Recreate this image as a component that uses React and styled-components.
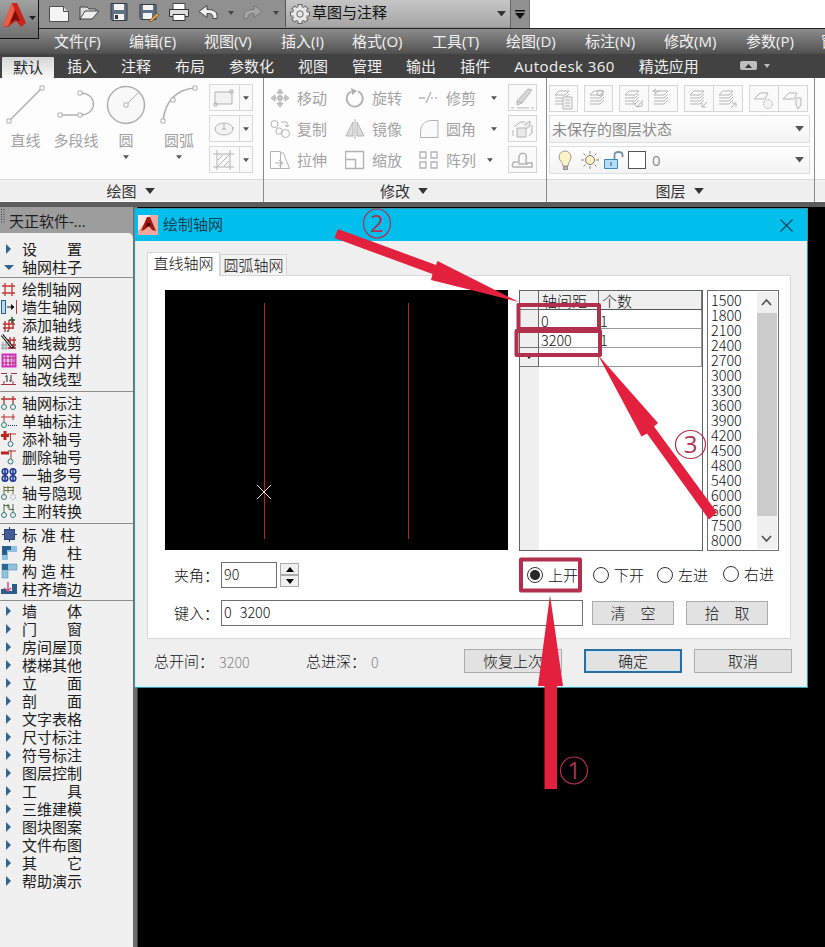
import React from "react";
import styled, { createGlobalStyle, css } from "styled-components";

const ui = `"Open Sans", "Noto Sans CJK SC", sans-serif`;
const song = `"Noto Sans CJK SC", sans-serif`;

const menus = [
  ["文件(F)", 75], ["编辑(E)", 75], ["视图(V)", 77], ["插入(I)", 71], ["格式(O)", 80], ["工具(T)", 74],
  ["绘图(D)", 79], ["标注(N)", 79], ["修改(M)", 82], ["参数(P)", 75], ["窗口(W)", 70],
];

const tabs = ["插入", "注释", "布局", "参数化", "视图", "管理", "输出", "插件", "Autodesk 360", "精选应用"];

const sections = [
  {
    items: [["right", "设置"], ["down", "轴网柱子"]],
    gap: 4,
    line: 1,
  },
  {
    items: [
      ["grid", "绘制轴网"], ["wall", "墙生轴网"], ["gridAdd", "添加轴线"],
      ["gridCut", "轴线裁剪"], ["gridMerge", "轴网合并"], ["gridType", "轴改线型"],
    ],
    gap: 6,
    line: 3,
  },
  {
    items: [
      ["dim2", "轴网标注"], ["dim1", "单轴标注"], ["numAdd", "添补轴号"], ["numDel", "删除轴号"],
      ["multi", "一轴多号"], ["hide", "轴号隐现"], ["swap", "主附转换"],
    ],
    gap: 6,
    line: 3,
  },
  {
    items: [["column", "标准柱"], ["corner", "角柱"], ["struct", "构造柱"], ["align", "柱齐墙边"]],
    gap: 4,
    line: 2,
  },
  {
    items: [
      "墙体", "门窗", "房间屋顶", "楼梯其他", "立面", "剖面", "文字表格", "尺寸标注", "符号标注",
      "图层控制", "工具", "三维建模", "图块图案", "文件布图", "其它", "帮助演示",
    ].map((t) => ["right", t]),
  },
];

const spacings = [
  1500, 1800, 2100, 2400, 2700, 3000, 3300, 3600, 3900, 4200, 4500, 4800, 5400, 6000, 6600, 7500, 8000,
];

const sideIcons = {
  right: <path d="M6 4l5 5-5 5z" fill="#2f6690" />,
  down: <path d="M4 7h10l-5 5z" fill="#2f6690" />,
  grid: <path d="M5 3v13M12 3v13M2 6h13M2 13h13" stroke="#c23a34" strokeWidth="1.3" />,
  wall: (
    <>
      <rect x="1.5" y="2.5" width="4" height="13" fill="#b5dcee" stroke="#2b6186" />
      <path d="M7 9h6M11 6.500l3 2.500-3 2.500" stroke="#111" fill="#111" />
      <path d="M16.500 2v14" stroke="#b83b3b" />
    </>
  ),
  gridAdd: (
    <>
      <path d="M5 5v11M9 4v10M13 3v10M3 8h12M3 12h11" stroke="#b62f2f" strokeWidth="1.3" />
      <path d="M12 1v6M9 4h6M7 15h2" stroke="#255b3a" strokeWidth="1.6" />
    </>
  ),
  gridCut: (
    <>
      <path d="M3 8v8M6 8v8M1 11h7M1 14h7" stroke="#8e979a" />
      <path d="M10 3v12M14 3v12M8 6h8M8 11h8M8 14h8" stroke="#b62f2f" strokeWidth="1.3" />
      <path d="M2 1l11 13" stroke="#222" strokeWidth="3" />
      <path d="M2 1l10 12" stroke="#fff" />
    </>
  ),
  gridMerge: (
    <>
      <rect x="2.500" y="2.500" width="13" height="12" fill="#f6c8ed" stroke="#d02ec3" strokeWidth="2" />
      <path d="M6 3v11M10 3v11M13 3v11M3 6h12M3 11h12" stroke="#b01a76" />
    </>
  ),
  gridType: (
    <>
      <path d="M1 3.500h6M11 3.500h6M1 14.500h15M4 11v3M13 11v3" stroke="#a5333a" />
      <path d="M7 6v6M11 5v6M5.500 7L7 5M9.500 10l1.500 2" stroke="#222" />
    </>
  ),
  dim2: (
    <>
      <path d="M1 5h15M4 2v8M13 2v8" stroke="#b93131" strokeWidth="1.3" />
      <circle cx="4" cy="13" r="2.500" stroke="#2f7b79" fill="none" />
      <circle cx="13" cy="13" r="2.500" stroke="#2f7b79" fill="none" />
    </>
  ),
  dim1: (
    <>
      <path d="M1 5h14M4 2v8M13 2v6" stroke="#b93131" />
      <circle cx="4" cy="13" r="2.500" stroke="#2f7b79" fill="none" />
      <path d="M8 13.500h9" stroke="#2d344d" strokeDasharray="1 1" />
    </>
  ),
  numAdd: (
    <>
      <path d="M5 1v9M1 5.500h8" stroke="#c02222" strokeWidth="3" />
      <path d="M7 4h9M10.500 3v8" stroke="#b93131" />
      <circle cx="10.500" cy="14" r="2.500" stroke="#2f7b79" fill="none" />
    </>
  ),
  numDel: (
    <>
      <path d="M1 5h8" stroke="#c02222" strokeWidth="3" />
      <path d="M8 3h8M11 2v9" stroke="#b93131" />
      <circle cx="10.500" cy="13.500" r="2.500" stroke="#2f7b79" fill="none" />
    </>
  ),
  multi: (
    <g stroke="#213a91" strokeWidth="1.500" fill="#c4d1f1">
      <circle cx="5" cy="5.500" r="2.800" />
      <circle cx="13" cy="5.500" r="2.800" />
      <circle cx="5" cy="12.500" r="2.800" />
      <circle cx="13" cy="12.500" r="2.800" />
      <path d="M5 3v12M13 3v12" />
    </g>
  ),
  hide: (
    <>
      <path d="M4 2v9M13 2v8M4 3.500h10M4 6.500h10M8 2v7" stroke="#6b743f" fill="none" />
      <circle cx="4" cy="13" r="2.500" stroke="#2f7b79" fill="none" />
      <circle cx="13" cy="13" r="2.500" stroke="#a3a0bb" strokeDasharray="2 1" fill="none" />
    </>
  ),
  swap: (
    <>
      <path d="M4 2v9M13 2v8M4 3.500h5v4h5M8 2v4" stroke="#4b6944" fill="none" />
      <circle cx="4" cy="13" r="2.500" stroke="#2f7b79" fill="none" />
      <circle cx="13" cy="13" r="2.500" stroke="#2f7b79" fill="none" />
    </>
  ),
  column: (
    <>
      <path d="M9.500 1v15M2 8.500h15" stroke="#1f2d59" />
      <rect x="4.500" y="3.500" width="10" height="10" fill="#3f5d94" stroke="#2e4476" />
    </>
  ),
  corner: (
    <>
      <path d="M2 2h15v6H8v8H2z" fill="#8fc2df" />
      <path d="M2 2h9v4H7v5H2z" fill="#275e8c" />
    </>
  ),
  struct: (
    <>
      <path d="M2 2h15v6H8v8H2z" fill="#8fc2df" stroke="#4c84aa" strokeWidth=".5" />
      <path d="M2 2h6v6H2z" fill="#2c6797" />
    </>
  ),
  align: (
    <>
      <path d="M1 9h6v5H1zM7 11h10v3H7zM12 4h5v8h-5z" fill="#2a5c8c" />
      <path d="M8 2v10M4 8l4 3 3-3" stroke="#d0507e" strokeWidth="1.500" fill="none" />
    </>
  ),
};

const modifyIcons = {
  move: (
    <path
      d="M10 1l3 4H7zM10 19l3-4H7zM1 10l4-3v6zM19 10l-4-3v6zM8 8h4v4H8zM10 4v4M10 12v4M4 10h4M12 10h4"
      fill="#c9c9c9"
    />
  ),
  rotate: (
    <>
      <path d="M6 3.500a8 8 0 1 0 7-.2" strokeWidth="1.800" />
      <path d="M6 0l6 3-5 4z" fill="#b0b0b0" stroke="none" />
    </>
  ),
  trim: <path d="M0 10h6M12 10h2M16 10h2M7 15l5-11" strokeWidth="1.300" />,
  copy: (
    <>
      <circle cx="4.500" cy="5" r="3.500" />
      <circle cx="9" cy="12" r="3.200" />
      <circle cx="15.500" cy="14.500" r="4" />
      <path d="M11 3h6v4M15 6l2 2 2-2" />
    </>
  ),
  mirror: <path d="M8 3v14H1zM12 3v14h7zM10 0v20" fill="#dedede" />,
  fillet: <path d="M1.500 18.500V12C2 5 7 1.500 13 1.500h6v17z" fill="#fafafa" />,
  stretch: <path d="M.5 1.500h10v17H.5zM10.500 3h3l6 15.500h-9M5 13h7M9 10l4 3-4 3" fill="none" />,
  scale: <path d="M.5 1.500h18v17H.5zM.5 9.500h10v9" strokeWidth="1.400" />,
  array: <path d="M1 2h6v6H1zM12 2h6v6h-6zM1 12h6v6H1zM12 12h6v6h-6z" strokeWidth="1.300" />,
};

const modifyRows = [
  [["move", "移动"], ["rotate", "旋转"], ["trim", "修剪"]],
  [["copy", "复制"], ["mirror", "镜像"], ["fillet", "圆角"]],
  [["stretch", "拉伸"], ["scale", "缩放"], ["array", "阵列"]],
];

const sheets = "M8 4h10l-4 4H4zM4 11h10l4-4M4 14h10l4-4M4 17h10l4-4";

const layerTools = [
  [<path d="M13 11h9v12h-9zM15 14h5M15 17h5M15 20h5" fill="#f4f4f4" />],
  [<circle cx="15" cy="7" r="3" />],
  [<path d="M13 16l4 5 6-7M17 21l5-1v-4" />, <path d="M4 5h7M4 5l3-2M4 5l3 2" />],
  [<path d="M22 16l-5 5M17 17v4h4" />, <path d="M17 22l5-5M18 17h4v4" />],
  [
    <circle cx="18" cy="18" r="4.500" fill="#f2f2f2" strokeDasharray="2 1" />,
    <path d="M17 12h5v7l-3 4-2-4z" fill="#f4f4f4" />,
  ],
];

function Arrow({ w = 8, color = "#555" }) {
  return (
    <svg width={w} height={w / 2 + 1} viewBox="0 0 8 5">
      <path d="M0 0h8L4 5z" fill={color} />
    </svg>
  );
}

function SideItem({ icon, text }) {
  return (
    <SideRow>
      <svg width="18" height="18" viewBox="0 0 18 18">
        {sideIcons[icon]}
      </svg>
      <SideText $narrow={text.length === 3}>
        {text.length < 4 ? [...text].map((c) => <span key={c}>{c}</span>) : text}
      </SideText>
    </SideRow>
  );
}

function QuickAccess() {
  return (
    <Quick>
      <svg width="246" height="28" viewBox="38 0 246 28" fill="none">
        <path d="M49.500 6.500h14l5 5v10h-19z" fill="#f4f4f4" stroke="#4d4d4d" />
        <path d="M63.500 6.500v5h5" fill="#ddd" stroke="#4d4d4d" />
        <path d="M80 7h7l2 2h7v4H85l-5 7z" fill="#ddd" stroke="#444" />
        <path d="M80 19l5-8h14l-7 8z" fill="#eee" stroke="#444" />
        <path d="M111 3.500h16v17h-15l-1-1z" fill="#5f7183" stroke="#343c44" />
        <path d="M114 4h10v6h-10zM114 14h10v6h-10z" fill="#f2f2f2" />
        <path d="M115 15h3v4h-3z" fill="#333" />
        <path d="M140 4.500h16v15h-15l-1-1z" fill="#5f7183" stroke="#343c44" />
        <path d="M143 5h10v5h-10zM143 13h9v6h-9z" fill="#f2f2f2" />
        <path d="M149 21l8-8 2 2-8 7z" fill="#e5a44f" stroke="#694a28" strokeWidth=".7" />
        <path d="M173 3.500h12v6h-12z" fill="#fff" stroke="#444" />
        <path d="M169.500 9.500h19v7h-19z" fill="#ddd" stroke="#333" />
        <path d="M173 14.500h12v6h-12z" fill="#fff" stroke="#333" />
        <path d="M199 11.500l8-6v4c7 0 11 2 10 9h-4c0-4-1-5-6-5v4z" fill="#eee" stroke="#444" />
        <path d="M228 11h6l-3 4zM273 11h6l-3 4z" fill="#444" />
        <path d="M262 11.500l-8-6v4c-7 0-11 2-10 9h4c0-4 1-5 6-5v4z" fill="#a5a5a5" stroke="#777" />
      </svg>
      <Workspace>
        <svg width="24" height="24" viewBox="-12 -12 24 24" fill="#e9e9e9" stroke="#666">
          {[0, 45, 90, 135].map((a) => (
            <rect key={a} x="-2" y="-9.500" width="4" height="19" transform={`rotate(${a})`} />
          ))}
          <circle r="7" stroke="none" />
          <circle r="3.200" />
        </svg>
        <span>草图与注释</span>
        <Arrow w={9} color="#333" />
      </Workspace>
      <QuickMore>
        <svg width="10" height="9" viewBox="0 0 10 9">
          <path d="M0 0h10v1.500H0zM0 3h10L5 9z" fill="#111" />
        </svg>
      </QuickMore>
    </Quick>
  );
}

function DrawPanel() {
  return (
    <Panel $w={264}>
      <PanelBody>
        <Tool $w={51}>
          <svg width="40" height="42" viewBox="0 0 40 42">
            <path d="M3 38L36 5" strokeWidth="1.500" />
            <path d="M1 36h4v4H1zM34 3h4v4h-4z" fill="#fff" />
          </svg>
          直线
        </Tool>
        <Tool $w={50}>
          <svg width="40" height="42" viewBox="0 0 40 42">
            <path d="M4 32h20M24 10c18 0 18 22 0 22" strokeWidth="1.500" />
            <path d="M2 30h4v4H2zM22 30h4v4h-4zM22 8h4v4h-4z" fill="#fff" />
          </svg>
          多段线
        </Tool>
        <Tool $w={50}>
          <svg width="40" height="42" viewBox="0 0 40 42">
            <circle cx="20" cy="22" r="18.500" fill="#f8f8f8" strokeWidth="1.500" />
            <path d="M20 22L33 9" />
            <path d="M18 20h4v4h-4z" fill="#fff" />
          </svg>
          圆
          <Arrow w={6} />
        </Tool>
        <Tool $w={56}>
          <svg width="40" height="42" viewBox="0 0 40 42">
            <path d="M4 38C6 18 18 6 36 5" strokeWidth="1.500" />
            <path d="M2 36h4v4H2zM12 15h4v4h-4zM34 3h4v4h-4z" fill="#fff" />
          </svg>
          圆弧
          <Arrow w={6} />
        </Tool>
        <SplitColumn>
          {[
            <path key="r" d="M5 7h17v12H5zM20 5h3v3h-3zM4 18h3v3H4z" fill="#f2f2f2" />,
            <g key="e">
              <ellipse cx="14" cy="13" rx="9" ry="6" fill="#f2f2f2" />
              <path d="M14 8v6M12 13h4M22 12h2" />
            </g>,
            <path key="h" d="M3 7h21M3 20h21M7 3v20M20 3v20M8 13l5-5M8 19L19 8M14 19l5-5" />,
          ].map((icon, i) => (
            <Split key={i}>
              <svg width="29" height="26" viewBox="0 0 29 26">{icon}</svg>
              <SplitDrop><Arrow w={6} /></SplitDrop>
            </Split>
          ))}
        </SplitColumn>
      </PanelBody>
      <PanelTitle>绘图 <Arrow w={10} color="#333" /></PanelTitle>
    </Panel>
  );
}

function ModifyPanel() {
  return (
    <Panel $w={283}>
      <ModifyGrid>
        {modifyRows.map((row, r) => (
          <React.Fragment key={r}>
            {row.map(([icon, text]) => (
              <ModifyItem key={text}>
                <svg width="20" height="20" viewBox="0 0 20 20" fill="none" stroke="#b3b3b3">
                  {modifyIcons[icon]}
                </svg>
                {text}
              </ModifyItem>
            ))}
            <ModifyDrop $shift={r === 2}><Arrow w={6} /></ModifyDrop>
            <ToolButton $w={29}>
              <svg width="27" height="26" viewBox="0 0 27 26">
                {r === 0 && <path d="M8 16L19 4l4 1-10 13-5 2zM8 16l5 2M2 23h3M8 23h12M22 23h3" fill="#d6d6d6" />}
                {r === 1 && <path d="M8 12h9v9H8zM4 14v6M5 11l6-5h5M15 9l6-4v5l-4 3M23 9v8l-3 3" fill="#e9e9e9" />}
                {r === 2 && <path d="M4 20h19v-4h-6v-3c3-9-9-9-7 0v2H5c-2 1-2 4-1 5zM9 17h10" fill="none" strokeWidth="1.500" />}
              </svg>
            </ToolButton>
          </React.Fragment>
        ))}
      </ModifyGrid>
      <PanelTitle>修改 <Arrow w={10} color="#333" /></PanelTitle>
    </Panel>
  );
}

function LayerPanel() {
  return (
    <Panel $w={268}>
      <LayerBody>
        <LayerTools>
          {layerTools.map((group, i) => (
            <ToolGroup key={i}>
              {group.map((icon, j) => (
                <ToolButton key={j} $w={group.length > 1 ? 29.5 : 29} $join={j > 0}>
                  <svg width="27" height="26" viewBox="0 0 27 26">
                    {i < 4 ? (
                      <path d={sheets} transform="translate(1 1)" fill="none" />
                    ) : (
                      <path d="M10 7h8l-3 6H4z" fill="none" />
                    )}
                    {icon}
                  </svg>
                </ToolButton>
              ))}
            </ToolGroup>
          ))}
        </LayerTools>
        <Combo>
          <span>未保存的图层状态</span>
          <Arrow w={9} />
        </Combo>
        <Combo>
          <svg width="98" height="26" viewBox="0 0 98 26" fill="none">
            <path d="M11 19c0-4-4-5-4-9a6 6 0 0 1 12 0c0 4-3 5-3 9z" fill="#fdf3c4" stroke="#999" />
            <path d="M11.500 19.500h4v3h-4z" fill="#bbb" stroke="#888" />
            <circle cx="38" cy="13" r="4.500" fill="#fdf2bd" stroke="#777" />
            <path d="M38 4v3M38 19v3M29 13h3M44 13h3M31.500 6.500l2 2M42.500 17.500l2 2M31.500 19.500l2-2M42.500 8.500l2-2" stroke="#8c866c" />
            <path d="M52.500 12.500h13v9h-13z" fill="#b5dcf5" stroke="#3b8abc" />
            <path d="M62.500 12V8c0-4 8-4 8 0v2M59 15v4" stroke="#7295a8" strokeWidth="1.800" />
            <rect x="76.500" y="4.500" width="17" height="17" fill="#fff" stroke="#555" />
          </svg>
          <LayerName>0</LayerName>
          <Arrow w={9} />
        </Combo>
      </LayerBody>
      <PanelTitle>图层 <Arrow w={10} color="#333" /></PanelTitle>
    </Panel>
  );
}

function AxisDialog() {
  return (
    <Dialog>
      <TitleBar>
        <svg width="20" height="20" viewBox="0 0 20 20">
          <rect width="20" height="20" fill="#f0a79c" />
          <path d="M0 0h13L0 16z" fill="#fbe5e0" />
          <path d="M3 16L9 2h3l6 14-4-1-3-4-5 4z" fill="#a3170f" />
          <path d="M9 8h3l1 3-5 1z" fill="#4b0704" />
        </svg>
        <span>绘制轴网</span>
        <svg width="13" height="13" viewBox="0 0 13 13">
          <path d="M.5.5l12 12M12.500.5l-12 12" stroke="#14465c" strokeWidth="1.200" />
        </svg>
      </TitleBar>
      <TabRow>
        <DialogTab $active>直线轴网</DialogTab>
        <DialogTab>圆弧轴网</DialogTab>
      </TabRow>
      <TabPage>
        <TopRow>
          <Preview>
            <svg width="343" height="260" viewBox="0 0 343 260" fill="none">
              <path d="M99.500 13v236M243.500 13v236" stroke="#b3241c" />
              <path d="M92 195l14 14M106 195l-14 14" stroke="#e8e8e8" />
            </svg>
          </Preview>
          <Sheet>
            <SheetGutter>
              <GutterCell />
              <GutterCell />
              <GutterCell />
              <GutterCell><Arrow w={6} color="#111" /></GutterCell>
            </SheetGutter>
            <SheetTable>
              <HeadCell>轴间距</HeadCell>
              <HeadCell>个数</HeadCell>
              <Cell>0</Cell>
              <Cell>1</Cell>
              <Cell>3200</Cell>
              <Cell>1</Cell>
              <Cell />
              <Cell />
            </SheetTable>
          </Sheet>
          <ListBox>
            <ListItems>
              {spacings.map((n) => (
                <div key={n}>{n}</div>
              ))}
            </ListItems>
            <ScrollBar>
              <svg width="19" height="21" viewBox="0 0 19 21" fill="none">
                <path d="M5 13l4.500-5 4.500 5" stroke="#555" strokeWidth="1.800" />
              </svg>
              <Thumb />
              <svg width="19" height="33" viewBox="0 0 19 33" fill="none">
                <path d="M5 20l4.500 5 4.500-5" stroke="#555" strokeWidth="1.800" />
              </svg>
            </ScrollBar>
          </ListBox>
        </TopRow>
        <FieldRow $top={11}>
          <Label $w={47}>夹角：</Label>
          <Field $w={56}>90</Field>
          <Spinner>
            <SpinButton><svg width="8" height="5"><path d="M0 5h8L4 0z" /></svg></SpinButton>
            <SpinButton><svg width="8" height="5"><path d="M0 0h8L4 5z" /></svg></SpinButton>
          </Spinner>
          <Radios>
            <Radio $w={66}><Dot $on />上开</Radio>
            <Radio $w={64}><Dot />下开</Radio>
            <Radio $w={66}><Dot />左进</Radio>
            <Radio $w={46} $raised><Dot />右进</Radio>
          </Radios>
        </FieldRow>
        <FieldRow $top={12}>
          <Label $w={47}>键入：</Label>
          <Field $w={362}>0 3200</Field>
          <Button $w={82} $left={9}>清　空</Button>
          <Button $w={82} $left={12}>拾　取</Button>
        </FieldRow>
      </TabPage>
      <Footer>
        <Label $w={65}>总开间：</Label>
        <Total $w={87}>3200</Total>
        <Label $w={65}>总进深：</Label>
        <Total $w={93}>0</Total>
        <Button $w={98}>恢复上次</Button>
        <Button $w={98} $left={22} $primary>确定</Button>
        <Button $w={98} $left={12}>取消</Button>
      </Footer>
    </Dialog>
  );
}

// Red callouts drawn over the window
function Callouts() {
  return (
    <Overlay width="825" height="947" viewBox="0 0 825 947">
      <g fill="none" stroke="#b2304d" strokeWidth="4" strokeLinejoin="round">
        <rect x="518.500" y="305" width="80.500" height="24" />
        <rect x="516.500" y="331" width="83.500" height="24" />
        <rect x="521" y="559.500" width="59" height="31" />
      </g>
      <g fill="#e3203d">
        <path d="M338 229l98 36 1.500-4L519 302l-88-22 1.500-6L334.500 238z" />
        <path d="M598 355l60 68-4 3.500 63 86-8 7-62-86-5.500 3z" />
        <path d="M550 595l13 91h-6v103h-12.500V686H538z" />
      </g>
      <g fill="none" stroke="#b2304d" strokeWidth="1.200">
        <circle cx="574" cy="770.500" r="13.500" />
        <ellipse cx="377" cy="223.500" rx="13.500" ry="14.500" />
        <ellipse cx="690.500" cy="444.500" rx="15" ry="14" />
      </g>
      <CalloutText x="574" y="779">1</CalloutText>
      <CalloutText x="377" y="232">2</CalloutText>
      <CalloutText x="690.500" y="453">3</CalloutText>
    </Overlay>
  );
}

export default function App() {
  return (
    <Screen>
      <Global />
      <QuickAccess />
      <MenuBar>
        {menus.map(([t, w]) => (
          <MenuItem key={t} $w={w}>{t}</MenuItem>
        ))}
      </MenuBar>
      <RibbonTabs>
        <RibbonTab $active>默认</RibbonTab>
        {tabs.map((t) => (
          <RibbonTab key={t} $latin={t.startsWith("A")}>{t}</RibbonTab>
        ))}
        <RibbonToggle width="32" height="12" viewBox="0 0 32 12">
          <rect x="0" y="1" width="17" height="9" rx="2" fill="#bdbdbd" />
          <path d="M5 8h7L8.500 4z" fill="#333" />
          <path d="M24 4h6l-3 4z" fill="#bbb" />
        </RibbonToggle>
      </RibbonTabs>
      <Ribbon>
        <DrawPanel />
        <ModifyPanel />
        <LayerPanel />
        <Panel $w={30}>
          <PanelBody />
          <PanelTitle />
        </Panel>
      </Ribbon>
      <Strip />
      <Main>
        <Sidebar>
          <SideTitle>
            <svg width="5" height="14" viewBox="0 0 5 14">
              <path d="M1.500 0v14M4 0v14" stroke="#444" strokeDasharray="1 1.500" />
            </svg>
            天正软件-...
          </SideTitle>
          <SideTree>
            {sections.map((s, i) => (
              <React.Fragment key={i}>
                {s.items.map(([icon, text]) => (
                  <SideItem key={text} icon={icon} text={text} />
                ))}
                {s.gap && <SideLine $gap={s.gap} $line={s.line} />}
              </React.Fragment>
            ))}
          </SideTree>
        </Sidebar>
        <Splitter />
      </Main>
      <AppButton>
        <svg width="38" height="38" viewBox="0 0 38 38">
          <path d="M3 26L12 3h5l9 20-5 4-5-6-8 6z" fill="#c9251a" />
          <path d="M12 3l3 8-7 15-5 0z" fill="#ea5f48" />
          <path d="M15 10l5 11-5-1-5 3z" fill="#7f0d08" />
          <path d="M29 16h7l-3.500 4z" fill="#222" />
        </svg>
      </AppButton>
      <AxisDialog />
      <Callouts />
    </Screen>
  );
}

const Global = createGlobalStyle`
  body {
    margin: 0;
    background: #000;
  }
  * {
    box-sizing: border-box;
  }
  svg {
    display: block;
    flex: none;
  }
`;

const Screen = styled.div`
  position: relative;
  display: flex;
  flex-direction: column;
  width: 825px;
  height: 947px;
  overflow: hidden;
  background: #000;
  font-family: ${ui};
  font-size: 15px;
  white-space: nowrap;
`;

const Quick = styled.div`
  display: flex;
  flex: none;
  height: 28px;
  padding-left: 38px;
  background: linear-gradient(to right, #909090 529px, #fff 529px);
`;

const Workspace = styled.div`
  display: flex;
  align-items: center;
  width: 225px;
  height: 27px;
  margin-left: 1px;
  padding: 0 4px 0 2px;
  background: linear-gradient(#c6c6c6, #a5a5a5);
  border-left: 1px solid #555;
  color: #111;
  span {
    flex: 1;
    line-height: 25px;
    margin-bottom: 2px;
  }
`;

const QuickMore = styled.div`
  display: flex;
  align-items: center;
  justify-content: center;
  width: 20px;
  border-left: 1px solid #666;
  border-right: 1px solid #777;
`;

const AppButton = styled.div`
  position: absolute;
  left: 0;
  top: 0;
  width: 39px;
  height: 39px;
  background: linear-gradient(#a2a2a2, #6f6f6f);
  border-right: 1px solid #111;
  border-bottom: 1px solid #111;
`;

const MenuBar = styled.div`
  display: flex;
  flex: none;
  height: 26px;
  padding-left: 54px;
  line-height: 24px;
  color: #f2f2f2;
  background: linear-gradient(#8c8c8c, #505050);
  border-top: 1px solid #222;
`;

const MenuItem = styled.div`
  flex: 0 0 ${(p) => p.$w}px;
`;

const RibbonTabs = styled.div`
  display: flex;
  flex: none;
  align-items: center;
  height: 24px;
  padding-left: 2px;
  background: #424242;
`;

const RibbonTab = styled.div`
  height: 24px;
  padding: 0 12px;
  line-height: 25px;
  letter-spacing: ${(p) => (p.$latin ? "0.45px" : "normal")};
  color: #f0f0f0;
  ${(p) =>
    p.$active &&
    css`
      height: 21px;
      margin: 3px 1px 0 0;
      padding: 0 11px;
      line-height: 20px;
      color: #222;
      background: linear-gradient(#d5d5d5, #fafafa);
      border-radius: 1px;
    `}
`;

const RibbonToggle = styled.svg`
  margin-left: 29px;
`;

const Ribbon = styled.div`
  display: flex;
  flex: none;
  height: 124px;
`;

const Panel = styled.div`
  display: flex;
  flex-direction: column;
  flex: 0 0 ${(p) => p.$w}px;
  background: #fdfdfd;
  border-right: 1px solid #8b8b8b;
  color: #a3a3a3;
`;

const PanelBody = styled.div`
  display: flex;
  height: 101px;
  padding-top: 5px;
`;

const PanelTitle = styled.div`
  display: flex;
  align-items: center;
  justify-content: center;
  gap: 8px;
  height: 22px;
  padding-right: 2px;
  line-height: 20px;
  background: #efefef;
  border-top: 1px solid #dadada;
  color: #333;
`;

const Tool = styled.div`
  display: flex;
  flex-direction: column;
  align-items: center;
  width: ${(p) => p.$w}px;
  line-height: 30px;
  svg {
    fill: none;
    stroke: #b0b0b0;
  }
  svg:nth-of-type(2) {
    stroke: none;
  }
`;

const SplitColumn = styled.div`
  display: flex;
  flex-direction: column;
  gap: 4px;
  padding: 1px 0 0 2px;
`;

const Split = styled.div`
  display: flex;
  width: 44px;
  height: 27px;
  border: 1px solid #d9d9d9;
  background: #fafafa;
  > svg {
    fill: none;
    stroke: #b3b3b3;
  }
`;

const SplitDrop = styled.div`
  display: flex;
  align-items: center;
  justify-content: center;
  flex: 1;
  border-left: 1px solid #d9d9d9;
`;

const ModifyGrid = styled.div`
  display: grid;
  grid-template-columns: 75px 74px 66px 23px 29px;
  grid-auto-rows: 27px;
  row-gap: 4px;
  height: 101px;
  padding: 6px 0 0 6px;
`;

const ModifyItem = styled.div`
  display: flex;
  align-items: center;
  gap: 7px;
`;

const ModifyDrop = styled.div`
  display: flex;
  align-items: center;
  padding-left: ${(p) => (p.$shift ? 2 : 6)}px;
`;

const ToolButton = styled.div`
  width: ${(p) => p.$w}px;
  height: 27px;
  border: 1px solid #d6d6d6;
  border-left-width: ${(p) => (p.$join ? 0 : 1)}px;
  background: #fafafa;
  svg {
    fill: none;
    stroke: #b5b5b5;
  }
`;

const LayerBody = styled.div`
  display: flex;
  flex-direction: column;
  gap: 3px;
  height: 101px;
  padding: 7px 4px 0 2px;
`;

const LayerTools = styled.div`
  display: flex;
  gap: 6px;
`;

const ToolGroup = styled.div`
  display: flex;
`;

const Combo = styled.div`
  display: flex;
  align-items: center;
  justify-content: space-between;
  height: 28px;
  padding: 0 5px 0 2px;
  line-height: 24px;
  border: 1px solid #dedede;
  background: linear-gradient(#fff, #f3f3f3);
  color: #8a8a8a;
`;

const LayerName = styled.span`
  flex: 1;
  padding-left: 2px;
`;

const Strip = styled.div`
  flex: none;
  height: 5px;
  background: #5c5c5c;
`;

const Main = styled.div`
  display: flex;
  flex: 1;
`;

const Sidebar = styled.div`
  display: flex;
  flex-direction: column;
  width: 133px;
  background: #9d9d9d;
  color: #1c1c1c;
`;

const SideTitle = styled.div`
  display: flex;
  align-items: center;
  gap: 4px;
  height: 26px;
  > svg {
    margin-bottom: 9px;
  }
`;

const SideTree = styled.div`
  flex: 1;
  padding-top: 7px;
  background: #f0f0f0;
  border-top-right-radius: 5px;
`;

const SideRow = styled.div`
  display: flex;
  gap: 4px;
  height: 18px;
`;

const SideText = styled.div`
  display: flex;
  justify-content: space-between;
  width: ${(p) => (p.$narrow ? 53 : 60)}px;
  line-height: 18px;
`;

const SideLine = styled.div`
  height: ${(p) => p.$gap}px;
  &::before {
    content: "";
    display: block;
    height: ${(p) => p.$line}px;
    border-bottom: 1px solid #8d8d8d;
  }
`;

const Splitter = styled.div`
  width: 5px;
  background: #6d6d6d;
  border-right: 1px solid #3c3c3c;
`;

const Dialog = styled.div`
  position: absolute;
  left: 134px;
  top: 208px;
  display: flex;
  flex-direction: column;
  width: 674px;
  height: 480px;
  background: #efefef;
  border: 1px solid #3e93a6;
  box-shadow: inset 1px 0 #cdf3f8, inset -1px 0 #cdf3f8, inset 0 -2px #d8f4f8;
  font-family: ${song};
  font-size: 15px;
  font-weight: 300;
  color: #111;
`;

const TitleBar = styled.div`
  display: flex;
  align-items: center;
  gap: 5px;
  height: 32px;
  padding: 0 14px 0 3px;
  background: #00bfec;
  color: #0d4154;
  font-weight: 400;
  span {
    flex: 1;
    line-height: 28px;
    margin-bottom: 3px;
  }
`;

const TabRow = styled.div`
  display: flex;
  align-items: flex-end;
  height: 34px;
  padding-left: 12px;
`;

const DialogTab = styled.div`
  width: ${(p) => (p.$active ? 73 : 67)}px;
  height: ${(p) => (p.$active ? 24 : 21)}px;
  margin-bottom: ${(p) => (p.$active ? -1 : 0)}px;
  line-height: 20px;
  text-align: center;
  background: ${(p) => (p.$active ? "#fff" : "#f2f2f2")};
  border: 1px solid #d6d6d6;
  border-bottom: none;
  z-index: 1;
`;

const TabPage = styled.div`
  width: 644px;
  height: 364px;
  margin-left: 12px;
  padding: 14px 0 0 17px;
  background: #fff;
  border: 1px solid #d9d9d9;
`;

const TopRow = styled.div`
  display: flex;
`;

const Preview = styled.div`
  width: 343px;
  height: 260px;
  background: #000;
`;

const Sheet = styled.div`
  display: flex;
  width: 184px;
  height: 261px;
  margin-left: 11px;
  border: 1px solid #5f6364;
`;

const SheetGutter = styled.div`
  width: 19px;
  background: #efefef;
`;

const GutterCell = styled.div`
  display: flex;
  align-items: center;
  justify-content: center;
  height: 19px;
  border-right: 1px solid #666;
  border-bottom: 1px solid #777;
`;

const SheetTable = styled.div`
  display: grid;
  grid-template-columns: 60px 103px;
  grid-auto-rows: 19px;
  align-content: start;
`;

const HeadCell = styled.div`
  padding-left: 3px;
  line-height: 20px;
  overflow: hidden;
  background: #efefef;
  border-right: 1px solid #777;
  border-bottom: 1px solid #555;
`;

// digits are 8px wide at this size
const digits = css`
  font-size: 14.4px;
  word-spacing: 4.8px;
`;

const Cell = styled.div`
  ${digits}
  padding-left: 2px;
  line-height: 21px;
  border-right: 1px solid #999;
  border-bottom: 1px solid #999;
  &:nth-child(even) {
    padding-left: 1px;
  }
`;

const ListBox = styled.div`
  display: flex;
  justify-content: space-between;
  width: 72px;
  height: 261px;
  margin-left: 4px;
  padding: 1px;
  border: 1px solid #6d7172;
`;

const ListItems = styled.div`
  ${digits}
  padding-left: 2px;
  line-height: 15px;
`;

const ScrollBar = styled.div`
  display: flex;
  flex-direction: column;
  width: 20px;
  background: #f0f0f0;
`;

const Thumb = styled.div`
  flex: 1;
  background: #cbcbcb;
`;

const FieldRow = styled.div`
  display: flex;
  align-items: center;
  height: 26px;
  margin-top: ${(p) => p.$top}px;
  padding-left: 9px;
`;

const Label = styled.div`
  width: ${(p) => p.$w}px;
  line-height: 24px;
`;

const Field = styled.div`
  ${digits}
  width: ${(p) => p.$w}px;
  height: 26px;
  padding-left: 2px;
  line-height: 21px;
  border: 1px solid #6f6f6f;
`;

const Spinner = styled.div`
  width: 19px;
  height: 24px;
  margin-left: 3px;
`;

const SpinButton = styled.div`
  display: flex;
  align-items: center;
  justify-content: center;
  height: 12px;
  background: #f0f0f0;
  border: 1px solid #aaa;
`;

const Radios = styled.div`
  display: flex;
  margin-left: 228px;
`;

const Radio = styled.div`
  display: flex;
  align-items: center;
  gap: 5px;
  width: ${(p) => p.$w}px;
  margin-bottom: ${(p) => (p.$raised ? 3 : 0)}px;
  line-height: 24px;
`;

const Dot = styled.span`
  flex: none;
  width: 16px;
  height: 16px;
  border: 1px solid #333;
  border-radius: 50%;
  background: ${(p) => (p.$on ? "radial-gradient(#2a2a2a 4.500px, #fff 5.500px)" : "#fff")};
`;

const Button = styled.div`
  width: ${(p) => p.$w}px;
  height: 24px;
  margin-left: ${(p) => p.$left || 0}px;
  line-height: 22px;
  text-align: center;
  background: #e2e2e2;
  border: 1px solid #acacac;
  ${(p) =>
    p.$primary &&
    css`
      line-height: 20px;
      border: 2px solid #2d6f9c;
      box-shadow: inset 0 0 0 1px #c5e6fa;
    `}
`;

const Footer = styled.div`
  display: flex;
  align-items: center;
  height: 24px;
  margin: 10px 0 0 19px;
`;

const Total = styled.div`
  ${digits}
  width: ${(p) => p.$w}px;
  color: #888;
`;

const Overlay = styled.svg`
  position: absolute;
  left: 0;
  top: 0;
`;

const CalloutText = styled.text`
  font-family: "Open Sans", sans-serif;
  font-size: 24px;
  text-anchor: middle;
  fill: #b2304d;
`;
